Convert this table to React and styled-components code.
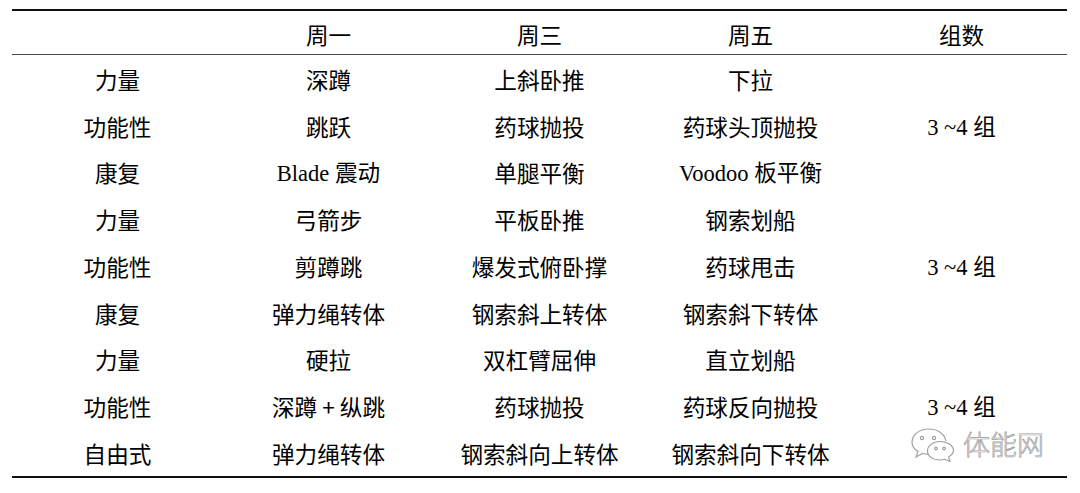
import React from "react";
import styled, { createGlobalStyle } from "styled-components";

const GlobalStyle = createGlobalStyle`
  html, body {
    margin: 0;
    padding: 0;
    background: #fff;
  }
  body {
    font-family: "Noto Sans CJK SC", "Noto Sans", sans-serif;
    color: #000;
  }
`;

const Page = styled.div`
  position: relative;
  width: 1080px;
  height: 493px;
  overflow: hidden;
  padding-top: 9px;
  box-sizing: border-box;
`;

const Table = styled.div`
  margin-left: 12px;
  width: 1055px;
  border-top: 2.5px solid #111;
  border-bottom: 2.5px solid #111;
`;

const HeaderRow = styled.div`
  display: grid;
  grid-template-columns: repeat(5, 211px);
  height: 44px;
  padding-top: 5px;
  box-sizing: border-box;
  align-items: center;
  border-bottom: 1.5px solid #4a4a4a;
`;

const Row = styled.div`
  display: grid;
  grid-template-columns: repeat(5, 211px);
  height: 46.75px;
  padding-top: 3px;
  box-sizing: border-box;
  align-items: center;
`;

const Cell = styled.div`
  text-align: center;
  font-size: 22.6px;
  font-weight: 400;
  line-height: 26px;
  white-space: nowrap;
`;

const Serif = styled.span`
  font-family: "Liberation Serif", "Noto Sans CJK SC", serif;
  font-size: 22.5px;
`;

const Watermark = styled.div`
  position: absolute;
  left: 910px;
  top: 426px;
  display: flex;
  align-items: center;
  gap: 7px;
`;

const WatermarkText = styled.span`
  font-family: "Noto Sans CJK SC", sans-serif;
  font-size: 27px;
  font-weight: 300;
  color: #fdfdfd;
  -webkit-text-stroke: 0.7px #9a9a9a;
  line-height: 30px;
`;

const header = ["", "周一", "周三", "周五", "组数"];

const rows = [
  ["力量", "深蹲", "上斜卧推", "下拉", ""],
  ["功能性", "跳跃", "药球抛投", "药球头顶抛投", "3 ~4 组"],
  ["康复", "Blade 震动", "单腿平衡", "Voodoo 板平衡", ""],
  ["力量", "弓箭步", "平板卧推", "钢索划船", ""],
  ["功能性", "剪蹲跳", "爆发式俯卧撑", "药球甩击", "3 ~4 组"],
  ["康复", "弹力绳转体", "钢索斜上转体", "钢索斜下转体", ""],
  ["力量", "硬拉", "双杠臂屈伸", "直立划船", ""],
  ["功能性", "深蹲 + 纵跳", "药球抛投", "药球反向抛投", "3 ~4 组"],
  ["自由式", "弹力绳转体", "钢索斜向上转体", "钢索斜向下转体", ""],
];

// latin runs (Blade, Voodoo, 3 ~4) are set in a serif face like the original
function renderText(text) {
  const parts = text.split(/([A-Za-z0-9~ ]*[A-Za-z0-9~]+ ?)/).filter(Boolean);
  return parts.map((p, i) =>
    /[A-Za-z0-9~]/.test(p) ? <Serif key={i}>{p}</Serif> : <React.Fragment key={i}>{p}</React.Fragment>
  );
}

function WeChatIcon() {
  return (
    <svg width="46" height="36" viewBox="0 0 46 36" fill="none" stroke="#a0a0a0" strokeWidth="1.2">
      <path d="M19 3 C9 3 2 9 2 16 C2 20 4 23 8 25.5 L6 31 L12.5 27.5 C14.5 28 16.5 28.3 18.5 28.3" />
      <path d="M19 3 C28 3 35 8.5 35.8 15" />
      <circle cx="12" cy="12" r="1.6" />
      <circle cx="24" cy="12" r="1.6" />
      <path d="M30 15.5 C22.5 15.5 17.5 20 17.5 25 C17.5 30 22.5 34 30 34 C31.8 34 33.4 33.8 34.8 33.3 L40 35.5 L38.6 31 C41.6 29 43.5 27.2 43.5 24.8 C43.5 20 38 15.5 30 15.5 Z" />
      <circle cx="26" cy="22.5" r="1.3" />
      <circle cx="34" cy="22.5" r="1.3" />
    </svg>
  );
}

export default function App() {
  return (
    <>
      <GlobalStyle />
      <Page>
        <Table>
          <HeaderRow>
            {header.map((h, i) => (
              <Cell key={i}>{h}</Cell>
            ))}
          </HeaderRow>
          {rows.map((r, ri) => (
            <Row key={ri}>
              {r.map((c, ci) => (
                <Cell key={ci}>{renderText(c)}</Cell>
              ))}
            </Row>
          ))}
        </Table>
        <Watermark>
          <WeChatIcon />
          <WatermarkText>体能网</WatermarkText>
        </Watermark>
      </Page>
    </>
  );
}
